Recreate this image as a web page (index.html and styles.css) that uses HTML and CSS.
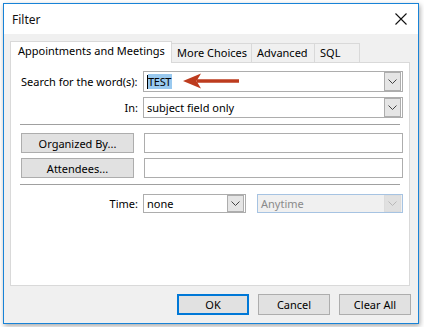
FILE: index.html
```html
<!DOCTYPE html>
<html lang="en">
<head>
    <meta charset="UTF-8">
    <title>Filter</title>
    <link rel="stylesheet" href="styles.css">
</head>
<body>
    <div class="window">
        <div class="titlebar">
            <span class="title">Filter</span>
            <svg class="close" width="12" height="12" viewBox="0 0 12 12">
                <path d="M0.5 0.5 L11.5 11.5 M11.5 0.5 L0.5 11.5" stroke="#111" stroke-width="1.1" fill="none"/>
            </svg>
        </div>

        <div class="content">
            <div class="tabs">
                <div class="tab active">Appointments and Meetings</div>
                <div class="tab choices">More Choices</div>
                <div class="tab advanced">Advanced</div>
                <div class="tab sql">SQL</div>
            </div>

            <div class="panel">
                <!-- search words -->
                <div class="row search">
                    <label class="label">Search for the word(s):</label>
                    <div class="combo tall">
                        <span class="value"><span class="caret"></span><span class="selected">TEST</span></span>
                        <span class="drop"><svg width="9" height="5" viewBox="0 0 9 5"><path d="M0.5 0.5 L4.5 4.5 L8.5 0.5" stroke="#444" fill="none"/></svg></span>
                    </div>
                    <svg class="annotation" width="56" height="18" viewBox="0 0 56 18">
                        <path d="M14 7.2 H56 V10.8 H14 Z" fill="#bd3b1e"/>
                        <path d="M0 9 L18 1.5 L13.5 9 L18 16.5 Z" fill="#bd3b1e"/>
                    </svg>
                </div>
                <div class="row">
                    <label class="label">In:</label>
                    <div class="combo tall">
                        <span class="value">subject field only</span>
                        <span class="drop"><svg width="9" height="5" viewBox="0 0 9 5"><path d="M0.5 0.5 L4.5 4.5 L8.5 0.5" stroke="#444" fill="none"/></svg></span>
                    </div>
                </div>

                <div class="divider"></div>

                <div class="row">
                    <button class="btn side">Organized By...</button>
                    <div class="field"></div>
                </div>
                <div class="row">
                    <button class="btn side">Attendees...</button>
                    <div class="field"></div>
                </div>

                <div class="divider"></div>

                <div class="row time">
                    <label class="label">Time:</label>
                    <div class="time-fields">
                        <div class="combo small">
                            <span class="value">none</span>
                            <span class="drop"><svg width="9" height="5" viewBox="0 0 9 5"><path d="M0.5 0.5 L4.5 4.5 L8.5 0.5" stroke="#444" fill="none"/></svg></span>
                        </div>
                        <div class="combo disabled">
                            <span class="value">Anytime</span>
                            <span class="drop"><svg width="9" height="5" viewBox="0 0 9 5"><path d="M0.5 0.5 L4.5 4.5 L8.5 0.5" stroke="#b8b8b8" fill="none"/></svg></span>
                        </div>
                    </div>
                </div>
            </div>

            <div class="footer">
                <button class="btn primary">OK</button>
                <button class="btn">Cancel</button>
                <button class="btn">Clear All</button>
            </div>
        </div>
    </div>
</body>
</html>
```

FILE: styles.css
```css
* {
    box-sizing: border-box;
}

body {
    margin: 0;
    background: #ffffff;
    font-family: "Noto Sans", "Open Sans", sans-serif;
    font-size: 11px;
    color: #000;
}

.window {
    margin: 3px;
    width: 416px;
    height: 321px;
    border: 1px solid #1883d7;
    background: #f0f0f0;
    box-shadow: 1px 2px 5px rgba(0, 0, 0, 0.35);
    display: flex;
    flex-direction: column;
}

.titlebar {
    height: 30px;
    background: #ffffff;
    display: flex;
    align-items: center;
    justify-content: space-between;
    padding: 0 11px 0 8px;
    flex-shrink: 0;
}

.title {
    font-size: 12px;
    color: #111;
}

.content {
    flex: 1;
    padding: 7px 8px 0 6px;
    display: flex;
    flex-direction: column;
}

/* tabs */
.tabs {
    display: flex;
    align-items: flex-end;
    height: 21px;
    position: relative;
    z-index: 1;
    flex-shrink: 0;
}

.tab {
    height: 19px;
    padding: 0 0 0 5px;
    border-top: 1px solid #d9d9d9;
    border-right: 1px solid #d9d9d9;
    background: #f0f0f0;
    line-height: 18px;
    white-space: nowrap;
}

.tab.active {
    width: 162px;
    height: 22px;
    padding-left: 7px;
    border-left: 1px solid #d9d9d9;
    background: #ffffff;
    line-height: 18px;
    margin-bottom: -1px;
}

.tab.choices {
    width: 80px;
}

.tab.advanced {
    width: 63px;
}

.tab.sql {
    width: 45px;
}

.panel {
    height: 224px;
    flex-shrink: 0;
    background: #ffffff;
    border: 1px solid #d9d9d9;
    padding: 8px 6px 0 10px;
    display: flex;
    flex-direction: column;
    gap: 5px;
}

.row {
    display: flex;
    align-items: center;
    gap: 5px;
    position: relative;
}

.label {
    width: 117px;
    text-align: right;
    flex-shrink: 0;
    white-space: nowrap;
}

.row.search .label {
    text-align: left;
}

.divider {
    height: 1px;
    flex-shrink: 0;
    background: #a0a0a0;
    margin: 1px 3px 0 -1px;
}

.divider + .row {
    margin-top: 3px;
}

.divider + .row.time {
    margin-top: 4px;
}

/* combos and fields */
.combo {
    flex: 1;
    height: 19px;
    border: 1px solid #adadad;
    background: #ffffff;
    display: flex;
    align-items: center;
    justify-content: space-between;
    padding-left: 3px;
    padding-right: 1px;
}

.combo.tall {
    height: 21px;
}

.value {
    display: flex;
    align-items: center;
    white-space: nowrap;
}

.drop {
    width: 17px;
    height: 17px;
    border: 1px solid #adadad;
    background: #e5e5e5;
    display: flex;
    align-items: center;
    justify-content: center;
}

.combo.tall .drop {
    height: 19px;
}

.caret {
    width: 1px;
    height: 14px;
    background: #000;
}

.selected {
    background: #99c9ef;
    line-height: 15px;
    padding-right: 1px;
    letter-spacing: -0.3px;
}

.annotation {
    position: absolute;
    left: 162px;
    top: 1px;
}

.field {
    flex: 1;
    height: 20px;
    border: 1px solid #adadad;
}

.time-fields {
    flex: 1;
    display: flex;
    gap: 11px;
}

.combo.small {
    flex: none;
    width: 103px;
}

.combo.disabled {
    border-color: #a6c3e2;
    background: #f0f0f0;
    color: #8a8a8a;
}

.combo.disabled .drop {
    border-color: #dcdcdc;
    background: #e0e0e0;
}

/* buttons */
.btn {
    font-family: "Noto Sans", "Open Sans", sans-serif;
    font-size: 11px;
    color: #000;
    background: #e1e1e1;
    border: 1px solid #adadad;
    height: 20px;
    padding: 0;
}

.btn.side {
    width: 113px;
    flex-shrink: 0;
    margin-right: 5px;
}

.footer {
    display: flex;
    justify-content: flex-end;
    gap: 9px;
    margin-top: 8px;
    margin-right: -1px;
}

.footer .btn {
    width: 72px;
    height: 21px;
}

.btn.primary {
    border: 2px solid #0078d7;
}
```
